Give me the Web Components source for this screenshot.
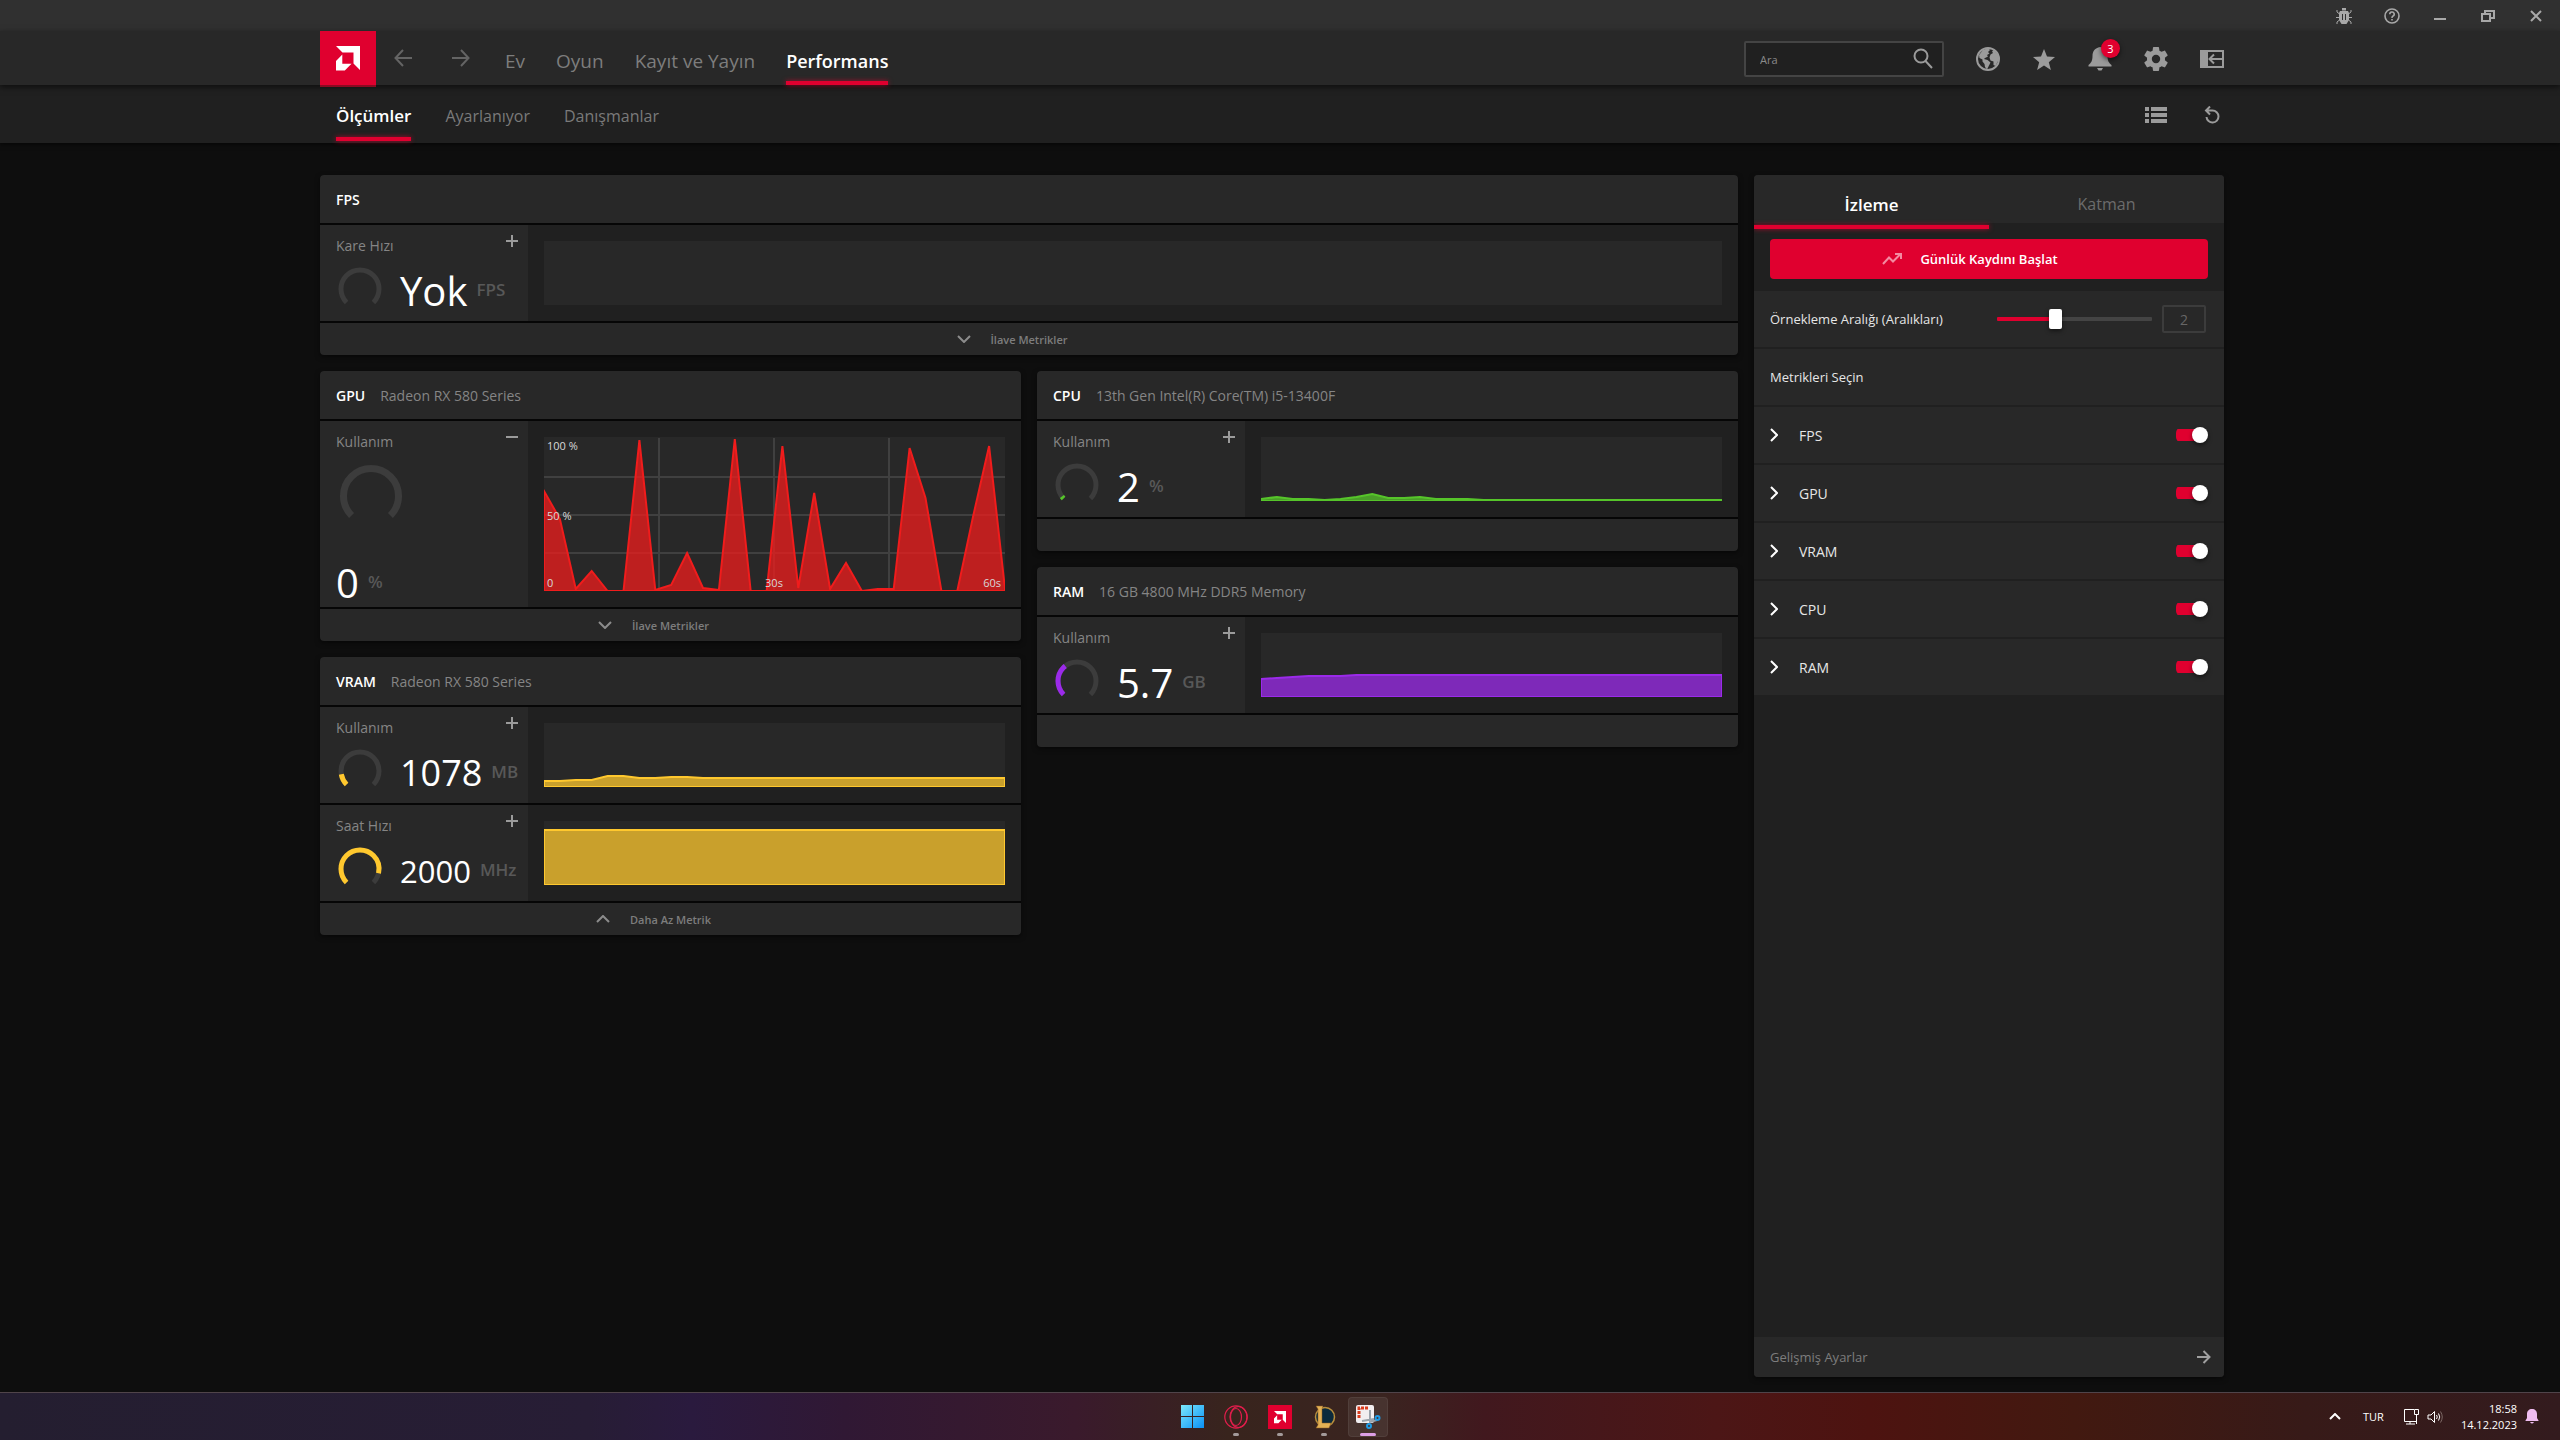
<!DOCTYPE html>
<html lang="tr">
<head>
<meta charset="utf-8">
<title>Performans</title>
<style>
  html, body { margin: 0; height: 100%; }
  body {
    background: #0e0e0e;
    color: #fff;
    font-family: "Open Sans", "Noto Sans", sans-serif;
    font-size: 13px;
  }
</style>
</head>
<body>
<perf-app></perf-app>

<script>
const RESET = `
  *, *::before, *::after { box-sizing: border-box; }
  button { font: inherit; color: inherit; background: none; border: 0; padding: 0; margin: 0; cursor: pointer; }
  a { color: inherit; text-decoration: none; }
  h2, h3, p { margin: 0; font: inherit; }
`;

function define(name, css, html) {
  customElements.define(name, class extends HTMLElement {
    constructor() {
      super();
      this.attachShadow({ mode: 'open' });
    }
    connectedCallback() {
      if (this.shadowRoot.firstChild) return;
      const t = document.createElement('template');
      t.innerHTML = `<style>${RESET}${css}</style>${typeof html === 'function' ? html(this) : html}`;
      this.shadowRoot.append(t.content.cloneNode(true));
    }
  });
}

/* ---------- icons: [width, height, markup] ---------- */
const AMD = '<path fill="#fff" d="M0 0H24V24L17.500 17.500V6.500H6.500ZM6.300 8.500V17.700H15.500L8.800 24.500H0V15Z"/>';
const line = (d, w = 2) => `<path d="${d}" fill="none" stroke="currentColor" stroke-width="${w}"/>`;
const solid = d => `<path d="${d}" fill="currentColor" fill-rule="evenodd"/>`;
const ICONS = {
  amd: [24, 25, AMD],
  back: [18, 18, line('M18 9H1.500M9 1L1.500 9L9 17')],
  forward: [18, 18, line('M0 9H16.500M9 1L16.500 9L9 17')],
  next: [14, 14, line('M0 7H12.500M6.500 1L12.500 7L6.500 13')],
  search: [24, 24, line('M15.500 9A6.500 6.500 0 1 1 2.500 9A6.500 6.500 0 1 1 15.500 9M13.500 14L20 21')],
  globe: [24, 24, '<circle cx="12" cy="12" r="11" fill="none" stroke="currentColor" stroke-width="2"/>' +
    solid('M3 8L7 3L12 1L14 3L12 5L13.500 6.500L11 8L12 9.500L9 11L8 12L11.500 13L14.500 15.500L13 18.500L11 22.500L9 20L8.500 17L6.500 14.500L6.500 12.500L3.500 11ZM14.500 7.500L17 6L16 4.500L18 3L22 8L22.500 13L19.500 19L17.500 18L17.500 14.500L14.500 13.500L13.500 10.500Z')],
  star: [22, 21, solid('M11 0L14 7.600L22 8L15.800 13.200L17.900 21L11 16.600L4.100 21L6.200 13.200L0 8L8 7.600Z')],
  bell: [24, 24, solid('M12 0C7 1 4.500 4 4.500 9C4.500 14 3 16 0.500 18V19.500H23.500V18C21 16 19.500 14 19.500 9C19.500 4 17 1 12 0ZM9 21H15L13.500 23.500H10.500Z')],
  gear: [24, 24, '<g transform="translate(-2.400 -2.400) scale(1.200)">' + solid('M12 15.500A3.500 3.500 0 0 1 8.500 12A3.500 3.500 0 0 1 12 8.500A3.500 3.500 0 0 1 15.500 12A3.500 3.500 0 0 1 12 15.500M19.430 12.970C19.470 12.650 19.500 12.330 19.500 12C19.500 11.670 19.470 11.340 19.430 11L21.540 9.370C21.730 9.220 21.780 8.950 21.660 8.730L19.660 5.270C19.540 5.050 19.270 4.960 19.050 5.050L16.560 6.050C16.040 5.660 15.500 5.320 14.870 5.070L14.500 2.420C14.460 2.180 14.250 2 14 2H10C9.750 2 9.540 2.180 9.500 2.420L9.130 5.070C8.500 5.320 7.960 5.660 7.440 6.050L4.950 5.050C4.730 4.960 4.460 5.050 4.340 5.270L2.340 8.730C2.210 8.950 2.270 9.220 2.460 9.370L4.570 11C4.530 11.340 4.500 11.670 4.500 12C4.500 12.330 4.530 12.650 4.570 12.970L2.460 14.630C2.270 14.780 2.210 15.050 2.340 15.270L4.340 18.730C4.460 18.950 4.730 19.030 4.950 18.950L7.440 17.940C7.960 18.340 8.500 18.680 9.130 18.930L9.500 21.580C9.540 21.820 9.750 22 10 22H14C14.250 22 14.460 21.820 14.500 21.580L14.870 18.930C15.500 18.670 16.040 18.340 16.560 17.940L19.050 18.950C19.270 19.030 19.540 18.950 19.660 18.730L21.660 15.270C21.780 15.050 21.730 14.780 21.540 14.630Z') + '</g>'],
  panel: [24, 18, solid('M0 0H24V18H0ZM8 2V16H22V2Z') + line('M22 9H9M14 4.500L9.500 9L14 13.500')],
  list: [22, 16, solid('M0 0H4V4H0ZM6 0H22V4H6ZM0 6H4V10H0ZM6 6H22V10H6ZM0 12H4V16H0ZM6 12H22V16H6Z')],
  reset: [16, 18, line('M2 4.500H8.500A6 6 0 1 1 2.500 11M6 0.500L2 4.500L6 8.500')],
  bug: [16, 18, solid('M6 1H10V3.500H6ZM4 4H12L13 6V13L10.500 17H5.500L3 13V6ZM6 7V13H7V7ZM9 7V13H10V7Z') + line('M3.500 7L1 5V3M12.500 7L15 5V3M3 10.500H0M13 10.500H16M3.500 13L1 15V17M12.500 13L15 15V17', 1)],
  help: [16, 16, '<circle cx="8" cy="8" r="7" fill="none" stroke="currentColor" stroke-width="1.600"/>' + line('M5.800 6.300A2.200 2.200 0 1 1 8.800 8.200Q8 8.800 8 10M8 11V12.600', 1.600)],
  minimise: [12, 12, line('M0 9H12')],
  restore: [14, 12, line('M1 4H9V11H1ZM4 3V1H13V8H10')],
  close: [12, 12, line('M1 1L11 11M11 1L1 11')],
  plus: [12, 12, line('M0 6H12M6 0V12')],
  minus: [12, 12, line('M0 6H12')],
  down: [14, 8, line('M1 1L7 7L13 1')],
  up: [14, 8, line('M1 7L7 1L13 7')],
  right: [8, 14, line('M1 1L7 7L1 13')],
  trend: [20, 12, line('M1 11L7 4.500L11 8.500L18 1.500M13 1H19V6')],
  caret: [12, 7, line('M1 6L6 1L11 6')],
  windows: [23, 23, '<defs><linearGradient id="w" x1="0" y1="0" x2="1" y2="1"><stop stop-color="#7be9fb"/><stop offset="1" stop-color="#0a90f6"/></linearGradient></defs><path fill="url(#w)" d="M0 0H11V11H0ZM12 0H23V11H12ZM0 12H11V23H0ZM12 12H23V23H12Z"/>'],
  opera: [24, 24, '<g fill="none" stroke="#e01e4c" stroke-width="1.200"><circle cx="12" cy="12" r="11.200"/><ellipse cx="14.500" cy="12" rx="8.500" ry="10.500"/><ellipse cx="12" cy="12" rx="5.500" ry="8.500"/></g>'],
  amdTile: [24, 24, `<path fill="#e0002f" d="M0 0H24V24H0Z"/><g transform="translate(6 6) scale(.5)">${AMD}</g>`],
  league: [24, 24, '<circle cx="13" cy="12" r="9.500" fill="#0b2a3c" stroke="#b98f3d" stroke-width="1.500"/><path fill="#e3b155" stroke="#8a5a20" stroke-width=".5" d="M4 1H11L10 4V18H19L17 23H4L6 20V4Z"/>'],
  snip: [26, 26, '<rect x="1" y="1" width="18" height="18" rx="2" fill="#f1eef0"/><path d="M4 14V4H14" fill="none" stroke="#d83b1c" stroke-width="3" stroke-dasharray="3 1"/><path d="M15 6V18L22 16M7 17L19 15" fill="none" stroke="#9aa3ab" stroke-width="2"/><g fill="none" stroke="#1f9be6" stroke-width="2"><circle cx="22.500" cy="14" r="2"/><circle cx="14" cy="22" r="2"/></g>'],
  monitor: [18, 17, line('M11 1.500H1.500V13.500H13M7 13.500V16M3 16H12M11.500 1.500H15.500V6.500H11.500ZM13.500 6.500V16', 1)],
  speaker: [16, 14, line('M1 5H4L7.500 1.500V12.500L4 9H1ZM9.500 5Q11 7 9.500 9M11.500 3.500Q14 7 11.500 10.500', 1) + '<path d="M13.500 1.500Q17 7 13.500 12.500" fill="none" stroke="#7c6865"/>'],
  notify: [14, 15, solid('M7 0C4 0 2 2 2 5V9L0.500 11.500V12H13.500V11.500L12 9V5C12 2 10 0 7 0ZM5 13H9Q7 16 5 13Z')]
};

define('ui-icon', ':host { display: inline-flex; flex: none; } svg { display: block; }', el => {
  const [w, h, body] = ICONS[el.getAttribute('name')];
  return `<svg width="${w}" height="${h}" viewBox="0 0 ${w} ${h}" aria-hidden="true">${body}</svg>`;
});

/* ---------- window chrome ---------- */
define('title-bar', `
  :host { display: flex; justify-content: flex-end; height: 31px; background: #303030; color: #a8a8a8; }
  button { width: 48px; display: grid; place-items: center; }
`, `
  <button aria-label="Hata bildir"><ui-icon name="bug"></ui-icon></button>
  <button aria-label="Yardım"><ui-icon name="help"></ui-icon></button>
  <button aria-label="Küçült"><ui-icon name="minimise"></ui-icon></button>
  <button aria-label="Geri yükle"><ui-icon name="restore"></ui-icon></button>
  <button aria-label="Kapat"><ui-icon name="close"></ui-icon></button>
`);

const UNDERLINE = `
  content: ""; height: 4px; background: #e0002f; box-shadow: 0 0 5px rgba(224, 0, 47, .7);
`;

define('main-header', `
  :host {
    display: flex; height: 54px; padding: 0 336px 0 320px; background: #282828;
    position: relative; z-index: 1; box-shadow: 0 2px 6px rgba(0, 0, 0, .6);
  }
  .logo { width: 56px; display: grid; place-items: center; background: #e0002f; box-shadow: 0 2px 0 #8b0a22; }
  .history { display: flex; align-items: center; gap: 40px; padding: 3px 0 0 18px; color: #646464; }
  nav { display: flex; gap: 31px; padding: 6px 0 0 35px; font-size: 19px; color: #7d7d7d; }
  nav a { display: grid; align-items: center; position: relative; }
  nav a[aria-current] { color: #fff; font-size: 18px; font-weight: 600; }
  nav a[aria-current]::after { ${UNDERLINE} position: absolute; left: 0; right: 0; bottom: 0; }
  .tools { margin-left: auto; display: flex; align-items: center; gap: 32px; padding-top: 2px; color: #9b9b9b; }
  .tools button { width: 24px; height: 24px; display: grid; place-items: center; position: relative; }
  .search { display: flex; align-items: center; width: 200px; height: 36px; padding: 0 6px 0 14px; border: 2px solid #444; border-radius: 2px; background: #202020; }
  .search input { flex: 1; min-width: 0; border: 0; padding: 0; outline: 0; background: none; color: #fff; font: inherit; font-size: 11px; }
  .search input::placeholder { color: #8a8a8a; opacity: 1; }
  .badge {
    position: absolute; left: 13px; top: -8px; width: 19px; height: 19px; border-radius: 50%;
    background: #e0002f; color: #fff; font-size: 11px; line-height: 19px; text-align: center;
    box-shadow: 0 2px 5px rgba(0, 0, 0, .6);
  }
`, `
  <a class="logo" href="#" aria-label="AMD"><ui-icon name="amd"></ui-icon></a>
  <div class="history">
    <button aria-label="Geri"><ui-icon name="back"></ui-icon></button>
    <button aria-label="İleri"><ui-icon name="forward"></ui-icon></button>
  </div>
  <nav>
    <a href="#">Ev</a><a href="#">Oyun</a><a href="#">Kayıt ve Yayın</a><a href="#" aria-current="page">Performans</a>
  </nav>
  <div class="tools">
    <div class="search">
      <input type="text" placeholder="Ara" aria-label="Ara">
      <ui-icon name="search"></ui-icon>
    </div>
    <button aria-label="Web"><ui-icon name="globe"></ui-icon></button>
    <button aria-label="Favoriler"><ui-icon name="star"></ui-icon></button>
    <button aria-label="Bildirimler"><ui-icon name="bell"></ui-icon><span class="badge">3</span></button>
    <button aria-label="Ayarlar"><ui-icon name="gear"></ui-icon></button>
    <button aria-label="Kenar paneli"><ui-icon name="panel"></ui-icon></button>
  </div>
`);

define('sub-header', `
  :host { display: flex; height: 58px; padding: 0 336px; background: #202020; box-shadow: 0 2px 4px rgba(0, 0, 0, .5); }
  nav { display: flex; gap: 34px; padding: 5px 0 2px; font-size: 16px; color: #7a7a7a; }
  nav a { display: grid; align-items: center; position: relative; }
  nav a[aria-current] { color: #fff; font-size: 17px; font-weight: 600; }
  nav a[aria-current]::after { ${UNDERLINE} position: absolute; left: 0; right: 0; bottom: 0; }
  .tools { margin-left: auto; display: flex; align-items: center; gap: 32px; padding-top: 2px; color: #9b9b9b; }
  .tools button { width: 24px; height: 24px; display: grid; place-items: center; }
`, `
  <nav>
    <a href="#" aria-current="page">Ölçümler</a><a href="#">Ayarlanıyor</a><a href="#">Danışmanlar</a>
  </nav>
  <div class="tools">
    <button aria-label="Liste görünümü"><ui-icon name="list"></ui-icon></button>
    <button aria-label="Sıfırla"><ui-icon name="reset"></ui-icon></button>
  </div>
`);

/* ---------- metric cards ---------- */
define('metric-card', `
  :host { display: grid; gap: 2px; background: #060606; border-radius: 4px; overflow: hidden; box-shadow: 0 2px 5px rgba(0, 0, 0, .5); }
  header { display: flex; align-items: center; gap: 15px; height: 48px; padding: 0 16px; background: #282828; font-size: 14px; }
  h2 { font-weight: 600; }
  p { color: #858585; }
  footer { height: 32px; background: #282828; color: #7d7d7d; font-size: 11px; font-weight: 600; }
  footer button { width: 100%; height: 100%; display: grid; grid-template-columns: 1fr auto 1fr; align-items: center; }
  footer ui-icon { justify-self: end; margin-right: 20px; color: #8c8c8c; }
`, el => {
  const more = el.getAttribute('more');
  const sub = el.getAttribute('device');
  return `
    <header><h2>${el.getAttribute('name')}</h2>${sub ? `<p>${sub}</p>` : ''}</header>
    <slot></slot>
    <footer>${more ? `<button><ui-icon name="${el.hasAttribute('open') ? 'up' : 'down'}"></ui-icon><span>${more}</span></button>` : ''}</footer>`;
});

define('metric-gauge', ':host { display: block; flex: none; } svg { display: block; }', el => {
  const big = el.hasAttribute('big');
  const size = big ? 70 : 48, r = big ? 27.5 : 19, w = big ? 7 : 5, c = size / 2;
  const k = r * Math.SQRT1_2;
  const d = `M${c - k} ${c + k}A${r} ${r} 0 1 1 ${c + k} ${c + k}`;
  const v = Number(el.getAttribute('value'));
  return `<svg width="${size}" height="${size}" fill="none" stroke-width="${w}">
    <path d="${d}" stroke="#3c3c3c"/>
    ${v ? `<path d="${d}" pathLength="100" stroke-dasharray="${v} 200" stroke="${el.getAttribute('color')}"/>` : ''}
  </svg>`;
});

define('metric-chart', `
  :host { display: grid; grid-template-rows: minmax(0, 1fr); min-height: 0; background: #282828; }
  svg, .labels { grid-area: 1 / 1; }
  svg { display: block; width: 100%; height: 0; min-height: 100%; overflow: hidden; }
  .labels { display: grid; grid-template-columns: 1fr 1fr 1fr; padding: 1px 4px 0 3px; color: #d8d8d8; font-size: 11px; line-height: 16px; z-index: 1; }
  .top { grid-area: 1 / 1; align-self: start; }
  .mid { grid-area: 1 / 1; align-self: center; padding-top: 3px; }
  .zero { grid-area: 1 / 1; align-self: end; }
  .half { grid-area: 1 / 2; align-self: end; justify-self: center; }
  .full { grid-area: 1 / 3; align-self: end; justify-self: end; }
`, el => {
  const grid = el.hasAttribute('grid');
  const H = grid ? 154 : 64, N = 29, W = 461;
  let area = '';
  const color = el.getAttribute('color');
  if (color) {
    const v = el.getAttribute('values').split(' ').map(Number);
    while (v.length <= N) v.push(v[v.length - 1]);
    const list = v.map((y, i) => `${(i * W / N).toFixed(1)},${H - y}`);
    area = `<polygon points="0,${H} ${list.join(' ')} ${W},${H}" fill="${color}" fill-opacity=".75" stroke="${color}" stroke-width="2" vector-effect="non-scaling-stroke"/>`;
  }
  const rules = grid ? `<path d="M0 40H461M0 78H461M0 116H461M115 1V154M230 1V154M345 1V154" stroke="#404040" stroke-width="2" vector-effect="non-scaling-stroke"/>` : '';
  return `<svg viewBox="0 0 ${W} ${H}" preserveAspectRatio="none">${rules}${area}</svg>` + (grid ? `
    <div class="labels"><span class="top">100 %</span><span class="mid">50 %</span><span class="zero">0</span><span class="half">30s</span><span class="full">60s</span></div>` : '');
});

define('metric-row', `
  :host { display: grid; grid-template: minmax(0, 1fr) / 208px minmax(0, 1fr); height: 96px; background: #202020; }
  :host([big]) { height: 186px; }
  .cell { display: flex; flex-direction: column; padding: 0 4px 0 16px; background: #282828; }
  .head { display: flex; justify-content: space-between; height: 40px; }
  h3 { padding-top: 11px; font-size: 14px; line-height: 20px; color: #858585; }
  .head button { width: 24px; height: 24px; margin-top: 4px; display: grid; place-items: center; color: #9b9b9b; }
  .body { display: flex; align-items: center; gap: 16px; flex: none; }
  .reading { display: flex; align-items: center; gap: 9px; line-height: 40px; white-space: nowrap; }
  .body .reading { padding-top: 4px; }
  .value { font-size: 40px; }
  .value.m { font-size: 36px; }
  .value.s { font-size: 31px; }
  .unit { font-size: 17px; line-height: 38px; font-weight: 600; padding-bottom: 2px; color: #585858; }
  :host([big]) .cell { padding-bottom: 4px; }
  :host([big]) .cell > .reading { margin-top: auto; }
  .plot { display: grid; grid-template-rows: minmax(0, 1fr); min-height: 0; padding: 16px; }
`, el => {
  const a = n => el.getAttribute(n) || '';
  const big = el.hasAttribute('big');
  const size = a('value').length > 3 ? (a('unit').length > 2 ? 's' : 'm') : '';
  const reading = `<div class="reading"><span class="value ${size}">${a('value')}</span><span class="unit">${a('unit')}</span></div>`;
  return `
    <div class="cell">
      <div class="head"><h3>${a('label')}</h3><button aria-label="${big ? 'Daralt' : 'Genişlet'}"><ui-icon name="${big ? 'minus' : 'plus'}"></ui-icon></button></div>
      <div class="body"><metric-gauge ${big ? 'big' : ''} value="${a('gauge')}" color="${a('color')}"></metric-gauge>${big ? '' : reading}</div>
      ${big ? reading : ''}
    </div>
    <div class="plot"><metric-chart ${big ? 'grid' : ''} color="${a('color')}" values="${a('values')}"></metric-chart></div>`;
});

/* ---------- side panel ---------- */
define('toggle-row', `
  :host { display: flex; align-items: center; height: 56px; padding: 0 16px; background: #282828; color: #e6e6e6; }
  button { width: 29px; height: 24px; display: flex; align-items: center; color: #fff; }
  label { flex: 1; font-size: 14px; }
  input {
    appearance: none; margin: 0; width: 32px; height: 16px; display: flex; justify-content: flex-end;
    background: linear-gradient(#e0002f, #e0002f) 0 50% / 24px 12px no-repeat; border-radius: 6px;
  }
  input::before { content: ""; width: 16px; height: 16px; border-radius: 50%; background: #fff; box-shadow: 0 2px 4px rgba(0, 0, 0, .5); }
`, el => `
  <button aria-label="Aç"><ui-icon name="right"></ui-icon></button>
  <label for="t">${el.getAttribute('name')}</label>
  <input id="t" type="checkbox" role="switch" checked>
`);

define('side-panel', `
  :host { display: flex; flex-direction: column; background: #202020; border-radius: 4px; overflow: hidden; box-shadow: 0 2px 5px rgba(0, 0, 0, .5); }
  .tabs { display: grid; grid-template-columns: 1fr 1fr; height: 48px; background: #282828; font-size: 16px; color: #6c6c6c; }
  .tabs button { padding-top: 10px; position: relative; }
  .tabs [aria-selected="true"] { color: #fff; font-size: 17px; font-weight: 600; }
  .tabs [aria-selected="true"]::after { ${UNDERLINE} position: absolute; left: 0; right: 0; top: 50px; }
  .action { padding: 16px 16px 12px; }
  .start {
    width: 100%; height: 40px; border-radius: 4px; background: #e0002f; font-size: 13px; font-weight: 600;
    display: grid; grid-template-columns: 1fr auto 1fr; align-items: center;
  }
  .start ui-icon { justify-self: end; margin-right: 18px; color: #f38aa1; }
  .rows { display: grid; gap: 2px; }
  .row { display: flex; align-items: center; height: 56px; padding: 0 18px 0 16px; background: #282828; color: #e6e6e6; }
  .row label { flex: 1; }
  input[type="range"] { appearance: none; width: 155px; height: 20px; margin: 0 10px 0 0; background: none; }
  input[type="range"]::-webkit-slider-runnable-track { height: 4px; border-radius: 1px; background: linear-gradient(90deg, #e0002f 37%, #444 37%); }
  input[type="range"]::-webkit-slider-thumb { appearance: none; width: 13px; height: 20px; margin-top: -8px; border-radius: 2px; background: #fff; box-shadow: 0 2px 4px rgba(0, 0, 0, .5); }
  .num { width: 44px; height: 28px; padding: 0; border: 2px solid #3c3c3c; border-radius: 2px; background: none; color: #666; font: inherit; font-size: 14px; text-align: center; }
  .advanced { margin-top: auto; display: flex; align-items: center; justify-content: space-between; height: 40px; padding: 0 13px 0 16px; background: #282828; color: #7d7d7d; }
  .advanced ui-icon { color: #a0a0a0; }
`, `
  <div class="tabs" role="tablist">
    <button role="tab" aria-selected="true">İzleme</button><button role="tab" aria-selected="false">Katman</button>
  </div>
  <div class="action"><button class="start"><ui-icon name="trend"></ui-icon><span>Günlük Kaydını Başlat</span></button></div>
  <div class="rows">
    <div class="row">
      <label for="rate">Örnekleme Aralığı (Aralıkları)</label>
      <input id="rate" type="range" min="0.25" max="5" step="0.25" value="2">
      <input class="num" type="text" value="2" aria-label="Örnekleme aralığı değeri">
    </div>
    <div class="row"><h2>Metrikleri Seçin</h2></div>
    <toggle-row name="FPS"></toggle-row>
    <toggle-row name="GPU"></toggle-row>
    <toggle-row name="VRAM"></toggle-row>
    <toggle-row name="CPU"></toggle-row>
    <toggle-row name="RAM"></toggle-row>
  </div>
  <a class="advanced" href="#"><span>Gelişmiş Ayarlar</span><ui-icon name="next"></ui-icon></a>
`);

/* ---------- taskbar ---------- */
define('task-bar', `
  :host {
    display: grid; grid-template-columns: 1fr auto 1fr; align-items: center; height: 48px; border-top: 1px solid #50444a;
    background: linear-gradient(90deg, #241e30, #271d35 23%, #2a1a3e 27%, #301834 33%, #3a1a2c 42%, #38241d 48%, #3a2420 54%, #41181e 58%, #4c1616 67%, #4d1310 73%, #421910 81%, #371a18 90%, #331b1e);
  }
  .apps { grid-column: 2; display: flex; gap: 4px; }
  .apps button { width: 40px; height: 40px; display: grid; place-items: center; position: relative; border-radius: 4px; }
  .apps .on { background: rgba(255, 255, 255, .07); box-shadow: inset 0 0 0 1px rgba(255, 255, 255, .06); }
  .run::after { content: ""; position: absolute; left: 17px; bottom: 1px; width: 6px; height: 3px; border-radius: 2px; background: #a39a9a; }
  .on::after { left: 12px; width: 16px; background: #dd9fe6; }
  .tray { justify-self: end; display: flex; align-items: center; padding-right: 21px; font-size: 11px; line-height: 16px; }
  .tray button { display: flex; align-items: center; }
  .lang { margin: 0 19px 0 22px; }
  .net { gap: 6px; margin-right: 18px; }
  .tray .clock { display: block; text-align: right; margin-right: 8px; }
  .clock time { display: block; }
  .bell { color: #efbcf0; }
`, `
  <div class="apps">
    <button aria-label="Başlat"><ui-icon name="windows"></ui-icon></button>
    <button class="run" aria-label="Opera"><ui-icon name="opera"></ui-icon></button>
    <button class="run" aria-label="AMD Software"><ui-icon name="amdTile"></ui-icon></button>
    <button class="run" aria-label="League of Legends"><ui-icon name="league"></ui-icon></button>
    <button class="run on" aria-label="Ekran Alıntısı Aracı"><ui-icon name="snip"></ui-icon></button>
  </div>
  <div class="tray">
    <button aria-label="Gizli simgeler"><ui-icon name="caret"></ui-icon></button>
    <button class="lang">TUR</button>
    <button class="net" aria-label="Ağ ve ses"><ui-icon name="monitor"></ui-icon><ui-icon name="speaker"></ui-icon></button>
    <button class="clock"><time>18:58</time><time>14.12.2023</time></button>
    <button class="bell" aria-label="Bildirimler"><ui-icon name="notify"></ui-icon></button>
  </div>
`);

/* ---------- page ---------- */
define('perf-app', `
  :host { display: grid; grid-template-rows: auto auto auto 1fr auto; min-height: 100vh; }
  main { display: grid; grid-template-columns: minmax(0, 1fr) 470px; gap: 16px; padding: 32px 336px 15px 320px; }
  .cards { display: grid; grid-template-columns: repeat(2, minmax(0, 1fr)); gap: 16px; align-content: start; }
  .wide { grid-column: 1 / -1; }
  .col { display: grid; gap: 16px; align-content: start; }
`, `
  <title-bar></title-bar>
  <main-header></main-header>
  <sub-header></sub-header>
  <main>
    <div class="cards">
      <metric-card class="wide" name="FPS" more="İlave Metrikler">
        <metric-row label="Kare Hızı" value="Yok" unit="FPS"></metric-row>
      </metric-card>
      <div class="col">
        <metric-card name="GPU" device="Radeon RX 580 Series" more="İlave Metrikler">
          <metric-row big label="Kullanım" value="0" unit="%" color="#f01c1c"
            values="100 72 2 20 0 0 151 1 6 38 3 1 152 0 0 145 3 98 2 28 0 2 2 143 93 0 0 75 145 2"></metric-row>
        </metric-card>
        <metric-card name="VRAM" device="Radeon RX 580 Series" more="Daha Az Metrik" open>
          <metric-row label="Kullanım" value="1078" unit="MB" color="#ffc82e" gauge="13"
            values="6 6 7 7 11 11 9 9 10 10 9 9"></metric-row>
          <metric-row label="Saat Hızı" value="2000" unit="MHz" color="#ffc82e" gauge="88" values="55"></metric-row>
        </metric-card>
      </div>
      <div class="col">
        <metric-card name="CPU" device="13th Gen Intel(R) Core(TM) i5-13400F">
          <metric-row label="Kullanım" value="2" unit="%" color="#56c52a" gauge="3"
            values="2 4 2 2 1 2 4 7 3 3 4 2 2 2 1"></metric-row>
        </metric-card>
        <metric-card name="RAM" device="16 GB 4800 MHz DDR5 Memory">
          <metric-row label="Kullanım" value="5.7" unit="GB" color="#9b2aea" gauge="36"
            values="18 19 20 21 21 21 22"></metric-row>
        </metric-card>
      </div>
    </div>
    <side-panel></side-panel>
  </main>
  <task-bar></task-bar>
`);
</script>
</body>
</html>
